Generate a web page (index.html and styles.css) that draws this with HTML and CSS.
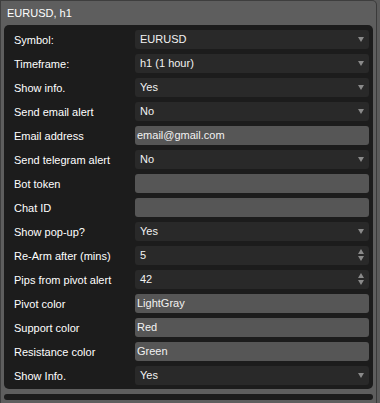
FILE: index.html
```html
<!DOCTYPE html>
<html lang="en">
<head>
    <meta charset="UTF-8">
    <title>EURUSD, h1</title>
    <link rel="stylesheet" href="styles.css">
</head>
<body>
    <div class="window">
        <div class="title">EURUSD, h1</div>
        <div class="panel">
            <div class="row"><span class="label">Symbol:</span><div class="field select">EURUSD<span class="arrow"></span></div></div>
            <div class="row"><span class="label">Timeframe:</span><div class="field select">h1 (1 hour)<span class="arrow"></span></div></div>
            <div class="row"><span class="label">Show info.</span><div class="field select">Yes<span class="arrow"></span></div></div>
            <div class="row"><span class="label">Send email alert</span><div class="field select">No<span class="arrow"></span></div></div>
            <div class="row"><span class="label">Email address</span><div class="field input">email@gmail.com</div></div>
            <div class="row"><span class="label">Send telegram alert</span><div class="field select">No<span class="arrow"></span></div></div>
            <div class="row"><span class="label">Bot token</span><div class="field input"></div></div>
            <div class="row"><span class="label">Chat ID</span><div class="field input"></div></div>
            <div class="row"><span class="label">Show pop-up?</span><div class="field select">Yes<span class="arrow"></span></div></div>
            <div class="row"><span class="label">Re-Arm after (mins)</span><div class="field select">5<span class="spin"><i class="up"></i><i class="down"></i></span></div></div>
            <div class="row"><span class="label">Pips from pivot alert</span><div class="field select">42<span class="spin"><i class="up"></i><i class="down"></i></span></div></div>
            <div class="row"><span class="label">Pivot color</span><div class="field input">LightGray</div></div>
            <div class="row"><span class="label">Support color</span><div class="field input">Red</div></div>
            <div class="row"><span class="label">Resistance color</span><div class="field input">Green</div></div>
            <div class="row"><span class="label">Show Info.</span><div class="field select">Yes<span class="arrow"></span></div></div>
        </div>
        <div class="panel next"></div>
    </div>
</body>
</html>
```

FILE: styles.css
```css
body {
    margin: 0;
    background-color: #5b5b5b;
    font-family: "Liberation Sans", Arial, sans-serif;
    font-size: 11px;
    color: #f2f2f2;
}
.window {
    width: 377px;
    height: 403px;
    box-sizing: border-box;
    background-color: #5e5e5e;
    border-left: 1px solid #3e3e3e;
    border-top: 1px solid #3e3e3e;
    border-right: 1px solid #3a3a3a;
    border-top-right-radius: 5px;
    padding: 0 0 0 3px;
    overflow: hidden;
}
.title {
    height: 24px;
    line-height: 24px;
    padding-left: 3px;
    font-size: 11px;
    color: #ffffff;
}
.panel {
    width: 369px;
    box-sizing: border-box;
    background-color: #1c1c1c;
    border-radius: 5px;
    padding: 5px 4px 4px 10px;
    display: flex;
    flex-direction: column;
    gap: 5px;
}
.panel.next {
    margin-top: 5px;
    height: 6px;
    padding: 0;
}
.row {
    display: flex;
    align-items: center;
    height: 19px;
}
.label {
    width: 121px;
    color: #ffffff;
}
.field {
    flex: 1;
    height: 19px;
    line-height: 18px;
    border-radius: 3px;
    box-sizing: border-box;
    position: relative;
}
.select {
    background-color: #292929;
    padding-left: 5px;
}
.input {
    background-color: #565656;
    padding-left: 2px;
}
.arrow {
    position: absolute;
    right: 5px;
    top: 7px;
    width: 0;
    height: 0;
    border-left: 3px solid transparent;
    border-right: 3px solid transparent;
    border-top: 5px solid #8a8a8a;
}
.spin {
    position: absolute;
    right: 5px;
    top: 3px;
    display: flex;
    flex-direction: column;
    gap: 2px;
}
.spin i {
    display: block;
    width: 0;
    height: 0;
    border-left: 3px solid transparent;
    border-right: 3px solid transparent;
}
.spin .up {
    border-bottom: 5px solid #8a8a8a;
}
.spin .down {
    border-top: 5px solid #8a8a8a;
}
```
